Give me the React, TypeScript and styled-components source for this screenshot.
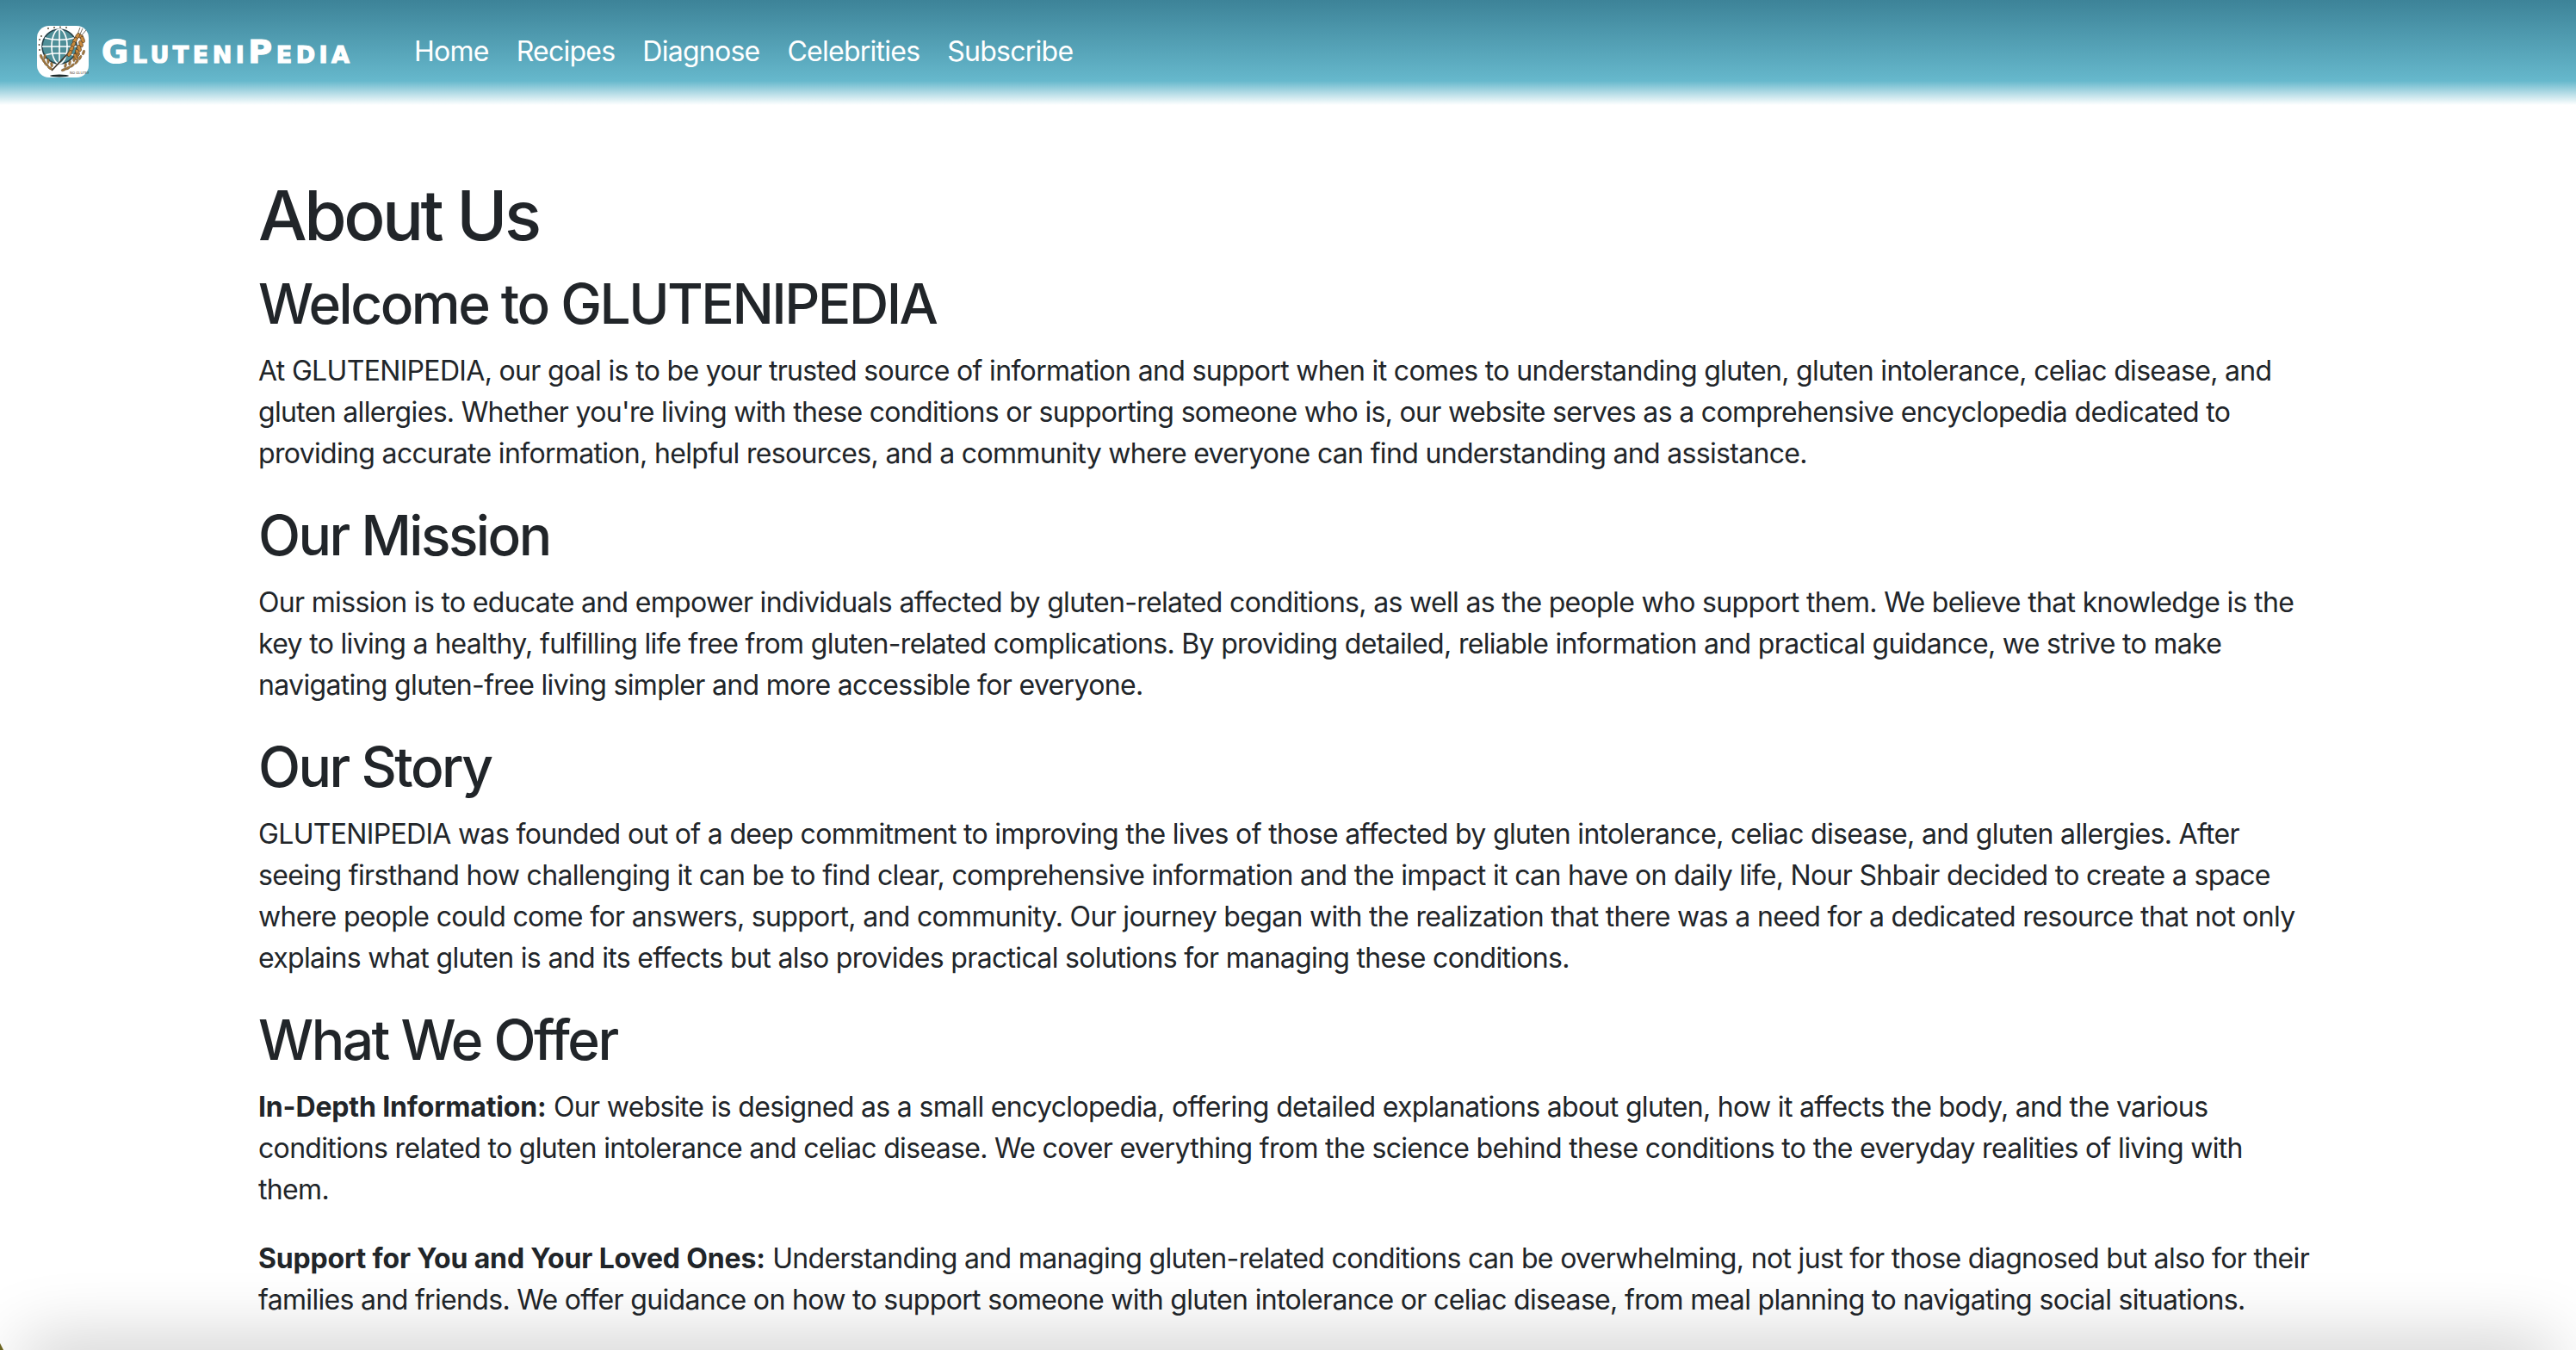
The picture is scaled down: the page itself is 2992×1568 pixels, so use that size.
import styled, { createGlobalStyle } from 'styled-components'

const GlobalStyle = createGlobalStyle`
    html, body {
        margin: 0;
        padding: 0;
        height: 1568px;
        overflow: hidden;
        background-color: #ffffff;
    }
    * {
        box-sizing: border-box;
    }
`

const Page = styled.div`
    position: relative;
    height: 1568px;
    overflow: hidden;
    font-family: Inter, 'Liberation Sans', sans-serif;
    color: #212529;
`

const Navbar = styled.nav`
    display: flex;
    align-items: center;
    height: 122px;
    padding: 0 0 2px 43px;
    background: linear-gradient(180deg, #3d8398 0%, #66b8cc 77%, #ffffff 100%);
`

const Brand = styled.a`
    display: flex;
    align-items: center;
    gap: 15px;
    width: 438px;
`

const BrandName = styled.span`
    font-family: 'DejaVu Sans', sans-serif;
    font-weight: 700;
    font-size: 38px;
    line-height: 48px;
    font-variant: small-caps;
    letter-spacing: 4.5px;
    color: #ffffff;
    -webkit-text-stroke: 1.2px #ffffff;
`

const NavLinks = styled.div`
    display: flex;
    gap: 32px;
`

const NavLink = styled.a`
    font-size: 32px;
    line-height: 48px;
    letter-spacing: -0.75px;
    color: #ffffff;
`

const Content = styled.main`
    padding: 80px 308px 0 300px;
`

const Title = styled.h1`
    margin: 0 0 16px;
    font-size: 80px;
    font-weight: 500;
    line-height: 96px;
    letter-spacing: -3.5px;
`

const Heading = styled.h2`
    margin: 0 0 16px;
    font-size: 64px;
    font-weight: 500;
    line-height: 77px;
    letter-spacing: -2.5px;
`

const Paragraph = styled.p`
    margin: 0 0 32px;
    font-size: 32px;
    line-height: 48px;
    letter-spacing: -0.67px;

    strong {
        letter-spacing: -0.15px;
    }
`

const BottomShadow = styled.div`
    position: absolute;
    left: 30px;
    right: 30px;
    bottom: -40px;
    height: 40px;
    border-radius: 100px;
    box-shadow: 0 0 80px 10px rgba(0, 0, 0, 0.22);
`

const CornerMark = styled.div`
    position: absolute;
    left: 0;
    bottom: 0;
    width: 0;
    height: 0;
    border-style: solid;
    border-width: 8px 0 0 4px;
    border-color: transparent transparent transparent #6b6420;
`

const grains: [number, number, number][] = [
    [50, 12, 20], [47, 12, -60], [53, 16, 70], [44, 17, -60], [51, 21, 70],
    [42, 22, -60], [49, 26, 70], [40, 27, -60], [47, 31, 70], [38, 32, -60], [45, 36, 70],
]

const wreathLeft: [number, number, number][] = [
    [5, 36, 70], [8, 41, 55], [11, 45, 40], [15, 49, 30], [9, 36, 100], [13, 41, 90], [17, 45, 80],
]

const wreathRight: [number, number, number][] = [
    [31, 51, -20], [36, 49, -30], [41, 46, -40], [46, 42, -50], [50, 37, -60], [54, 31, -70],
    [33, 46, -80], [38, 43, -80], [43, 39, -85], [47, 34, -90],
]

const dots: [number, number][] = [[3, 16], [2.5, 22], [3, 28], [5, 12], [13, 3], [20, 2], [27, 1.5], [34, 2]]

function Logo() {
    return (
        <svg width="60" height="60" viewBox="0 0 60 60">
            <rect width="60" height="60" rx="14" fill="#ffffff" />
            <circle cx="26" cy="24" r="20" fill="#4f8f98" stroke="#26424a" strokeWidth="1.6" />
            <ellipse cx="26" cy="24" rx="9" ry="20" fill="none" stroke="#ffffff" strokeWidth="1.6" />
            <path d="M6 24h40M9 14c10 3 24 3 34 0M9 34c10-3 24-3 34 0M26 4v40" stroke="#ffffff" strokeWidth="1.6" fill="none" />
            {dots.map(([x, y]) => (
                <circle key={`${x}-${y}`} cx={x} cy={y} r="0.9" fill="#4a3c28" />
            ))}
            <path d="M17 52L36 32L44 20" stroke="#3e3022" strokeWidth="1.6" fill="none" />
            <path d="M49 12L53 3M51 12L57 5M47 10L50 2" stroke="#3e3022" strokeWidth="0.7" fill="none" />
            {grains.map(([x, y, r]) => (
                <ellipse key={`${x}-${y}`} cx={x} cy={y} rx="4" ry="2.1" transform={`rotate(${r} ${x} ${y})`} fill="#c98a3e" stroke="#4d3a22" strokeWidth="0.6" />
            ))}
            {[...wreathLeft, ...wreathRight].map(([x, y, r]) => (
                <ellipse key={`${x}-${y}`} cx={x} cy={y} rx="3" ry="1.3" transform={`rotate(${r} ${x} ${y})`} fill="#a77a3c" stroke="#4d3a22" strokeWidth="0.4" />
            ))}
            <text x="38" y="56" fontSize="4" fontFamily="Inter, sans-serif" fill="#3e3022">NO GLUTEN</text>
            <ellipse cx="26" cy="58" rx="11" ry="1.4" fill="#1d2a2c" />
        </svg>
    )
}

export default function App() {
    return (
        <Page>
            <GlobalStyle />
            <Navbar>
                <Brand>
                    <Logo />
                    <BrandName>GluteniPedia</BrandName>
                </Brand>
                <NavLinks>
                    <NavLink>Home</NavLink>
                    <NavLink>Recipes</NavLink>
                    <NavLink>Diagnose</NavLink>
                    <NavLink>Celebrities</NavLink>
                    <NavLink>Subscribe</NavLink>
                </NavLinks>
            </Navbar>
            <Content>
                <Title>About Us</Title>
                <Heading>Welcome to GLUTENIPEDIA</Heading>
                <Paragraph>
                    At GLUTENIPEDIA, our goal is to be your trusted source of information and support when it comes to understanding gluten, gluten intolerance, celiac disease, and gluten allergies. Whether you're living with these conditions or supporting someone who is, our website serves as a comprehensive encyclopedia dedicated to providing accurate information, helpful resources, and a community where everyone can find understanding and assistance.
                </Paragraph>
                <Heading>Our Mission</Heading>
                <Paragraph>
                    Our mission is to educate and empower individuals affected by gluten-related conditions, as well as the people who support them. We believe that knowledge is the key to living a healthy, fulfilling life free from gluten-related complications. By providing detailed, reliable information and practical guidance, we strive to make navigating gluten-free living simpler and more accessible for everyone.
                </Paragraph>
                <Heading>Our Story</Heading>
                <Paragraph>
                    GLUTENIPEDIA was founded out of a deep commitment to improving the lives of those affected by gluten intolerance, celiac disease, and gluten allergies. After seeing firsthand how challenging it can be to find clear, comprehensive information and the impact it can have on daily life, Nour Shbair decided to create a space where people could come for answers, support, and community. Our journey began with the realization that there was a need for a dedicated resource that not only explains what gluten is and its effects but also provides practical solutions for managing these conditions.
                </Paragraph>
                <Heading>What We Offer</Heading>
                <Paragraph>
                    <strong>In-Depth Information:</strong> Our website is designed as a small encyclopedia, offering detailed explanations about gluten, how it affects the body, and the various conditions related to gluten intolerance and celiac disease. We cover everything from the science behind these conditions to the everyday realities of living with them.
                </Paragraph>
                <Paragraph>
                    <strong>Support for You and Your Loved Ones:</strong> Understanding and managing gluten-related conditions can be overwhelming, not just for those diagnosed but also for their families and friends. We offer guidance on how to support someone with gluten intolerance or celiac disease, from meal planning to navigating social situations.
                </Paragraph>
            </Content>
            <BottomShadow />
            <CornerMark />
        </Page>
    )
}
